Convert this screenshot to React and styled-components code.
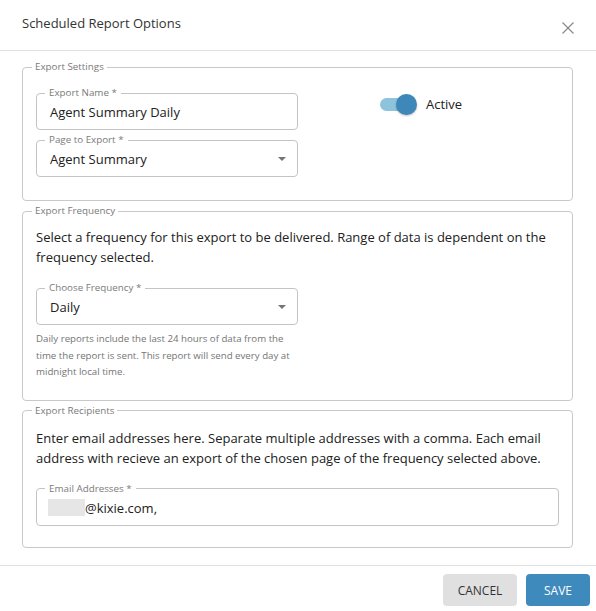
import React from "react";
import styled, { createGlobalStyle } from "styled-components";

const Global = createGlobalStyle`
  html, body { margin: 0; padding: 0; background: #fff; }
  body { font-family: "Open Sans", "Noto Sans", sans-serif; color: #212121; }
  * { box-sizing: border-box; }
`;

const Dialog = styled.div`
  width: 596px;
  height: 611px;
  display: flex;
  flex-direction: column;
  background: #fff;
`;

const Header = styled.div`
  height: 51px;
  border-bottom: 1px solid #e2e2e2;
  display: flex;
  align-items: flex-start;
  justify-content: space-between;
  padding: 13px 21px 0 22px;
`;

const Title = styled.h2`
  margin: 0;
  font-size: 13px;
  font-weight: 400;
  color: #333;
  line-height: 20px;
`;

const CloseBtn = styled.button`
  border: 0;
  background: transparent;
  padding: 0;
  margin-top: 8px;
  width: 14px;
  height: 14px;
  display: flex;
  cursor: pointer;
`;

const Content = styled.div`
  padding: 10px 23px 0 22px;
  display: flex;
  flex-direction: column;
  gap: 4px;
`;

const Section = styled.fieldset`
  margin: 0;
  border: 1px solid #c9c9c9;
  border-radius: 4px;
  padding: ${(p) => p.$pad};
  min-width: 0;
`;

const SectionLegend = styled.legend`
  font-size: 9.8px;
  line-height: 12px;
  color: #7a7a7a;
  padding: 0 3px;
  margin-left: -4px;
`;

const Row = styled.div`
  display: flex;
  align-items: flex-start;
`;

const Col = styled.div`
  display: flex;
  flex-direction: column;
  gap: 4px;
`;

const Field = styled.fieldset`
  margin: ${(p) => p.$margin || "0"};
  border: 1px solid #c4c4c4;
  border-radius: 4px;
  width: ${(p) => p.$width};
  height: 43px;
  padding: 0 14px 0 13px;
  position: relative;
  min-width: 0;
`;

const FieldLegend = styled.legend`
  font-size: 9.8px;
  line-height: 12px;
  color: #7a7a7a;
  padding: 0 4px;
  margin-left: -5px;
`;

const FieldValue = styled.div`
  font-size: 13px;
  line-height: 20px;
  color: #212121;
  padding-top: 3px;
  display: flex;
  align-items: center;
`;

const Arrow = styled.span`
  position: absolute;
  right: 11px;
  top: 11px;
  width: 0;
  height: 0;
  border-left: 4px solid transparent;
  border-right: 4px solid transparent;
  border-top: 4px solid #757575;
`;

const ToggleWrap = styled.label`
  display: flex;
  align-items: center;
  margin-left: 82px;
  margin-top: 8px;
  gap: 16px;
  font-size: 13px;
  color: #212121;
`;

const Track = styled.span`
  position: relative;
  width: 30px;
  height: 13px;
  border-radius: 7px;
  background: #8ec3dc;
  display: inline-block;
`;

const Thumb = styled.span`
  position: absolute;
  top: -4px;
  right: -7px;
  width: 21px;
  height: 21px;
  border-radius: 50%;
  background: #3d87b9;
  box-shadow: 0 1px 2px rgba(0, 0, 0, 0.25);
`;

const Para = styled.p`
  margin: 0;
  font-size: 13px;
  line-height: ${(p) => p.$lh || "19.5px"};
  color: #212121;
`;

const Helper = styled.p`
  margin: 6px 0 0;
  width: 262px;
  font-size: 9.7px;
  line-height: 16.5px;
  color: #757575;
`;

const Redacted = styled.span`
  display: inline-block;
  width: 37px;
  height: 17px;
  background: #e6e6e6;
  margin-left: -2px;
`;

const Footer = styled.div`
  margin-top: auto;
  height: 46px;
  border-top: 1px solid #e2e2e2;
  display: flex;
  justify-content: flex-end;
  align-items: flex-start;
  padding: 8px 6px 0 0;
  gap: 9px;
`;

const Button = styled.button`
  height: 32px;
  width: ${(p) => p.$w}px;
  border: 0;
  border-radius: 4px;
  font-family: inherit;
  font-size: 12px;
  text-transform: uppercase;
  background: ${(p) => (p.$primary ? "#3f8abd" : "#e0e0e0")};
  color: ${(p) => (p.$primary ? "#fff" : "#333")};
  cursor: pointer;
`;

export default function App() {
  return (
    <>
      <Global />
      <Dialog>
        <Header>
          <Title>Scheduled Report Options</Title>
          <CloseBtn aria-label="close">
            <svg width="14" height="14" viewBox="0 0 14 14">
              <path d="M1.5 1.5 L12.5 12.5 M12.5 1.5 L1.5 12.5" stroke="#8a8a8a" strokeWidth="1.2" fill="none" />
            </svg>
          </CloseBtn>
        </Header>
        <Content>
          <Section $pad="14px 13px 23px 13px">
            <SectionLegend>Export Settings</SectionLegend>
            <Row>
              <Col>
                <Field $width="262px">
                  <FieldLegend>Export Name *</FieldLegend>
                  <FieldValue>Agent Summary Daily</FieldValue>
                </Field>
                <Field $width="262px">
                  <FieldLegend>Page to Export *</FieldLegend>
                  <FieldValue>Agent Summary</FieldValue>
                  <Arrow />
                </Field>
              </Col>
              <ToggleWrap>
                <Track>
                  <Thumb />
                </Track>
                <span>Active</span>
              </ToggleWrap>
            </Row>
          </Section>
          <Section $pad="11px 13px 19px 13px">
            <SectionLegend>Export Frequency</SectionLegend>
            <Para>
              Select a frequency for this export to be delivered. Range of data is dependent on the frequency selected.
            </Para>
            <Field $width="262px" $margin="15px 0 0">
              <FieldLegend>Choose Frequency *</FieldLegend>
              <FieldValue>Daily</FieldValue>
              <Arrow />
            </Field>
            <Helper>
              Daily reports include the last 24 hours of data from the time the report is sent. This report will send every day at midnight local time.
            </Helper>
          </Section>
          <Section $pad="11px 13px 21px 13px">
            <SectionLegend>Export Recipients</SectionLegend>
            <Para $lh="20px">
              Enter email addresses here. Separate multiple addresses with a comma. Each email address with recieve an export of the chosen page of the frequency selected above.
            </Para>
            <Field $width="100%" $margin="15px 0 0">
              <FieldLegend>Email Addresses *</FieldLegend>
              <FieldValue>
                <Redacted />
                @kixie.com,
              </FieldValue>
            </Field>
          </Section>
        </Content>
        <Footer>
          <Button $w={74}>Cancel</Button>
          <Button $w={64} $primary>
            Save
          </Button>
        </Footer>
      </Dialog>
    </>
  );
}
